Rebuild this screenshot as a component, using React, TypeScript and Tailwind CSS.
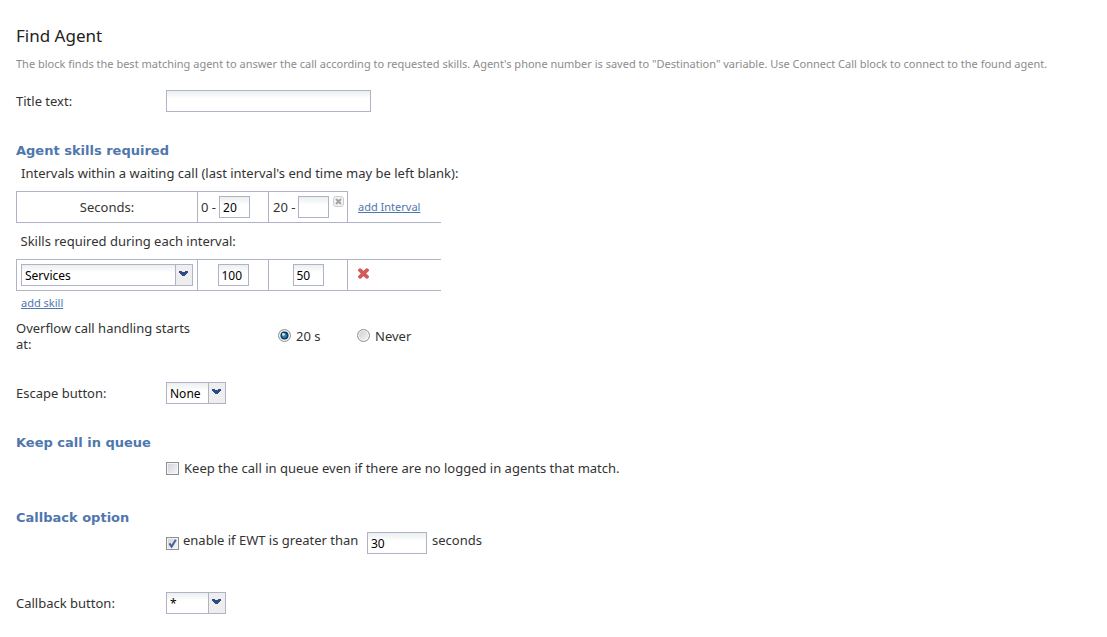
import { useState, type ReactNode, type ComponentProps } from "react";

const fieldStyle =
  "h-[22px] border border-[#b0b2c8] bg-white bg-linear-to-b from-[#ebefef] to-white to-40% px-[3px] text-[12px] text-black outline-none focus:border-[#6c7fb0]";

function TextField({ className = "", ...props }: ComponentProps<"input">) {
  return <input type="text" className={`${fieldStyle} ${className}`} {...props} />;
}

function SelectField({ className = "", children, ...props }: ComponentProps<"select">) {
  return (
    <span className={`relative inline-flex ${className}`}>
      <select className={`${fieldStyle} w-full appearance-none pt-px pr-5`} {...props}>
        {children}
      </select>
      <span className="pointer-events-none absolute inset-y-px right-px flex w-[17px] items-center justify-start rounded-tr-[2px] border-l border-[#b0b2c8] bg-[#eeeeee] pl-[3px]">
        <svg width="9" height="6" viewBox="0 0 9 6" className="mb-0.5 fill-[#2f4a8a]" shapeRendering="crispEdges" aria-hidden="true">
          <path d="M0 0h3v1h3V0h3v2H8v1H7v1H6v1H3V4H2V3H1V2H0z" />
        </svg>
      </span>
    </span>
  );
}

function CheckBox(props: ComponentProps<"input">) {
  return (
    <span className="relative inline-flex size-[13px] shrink-0">
      <input
        type="checkbox"
        className="peer size-[13px] appearance-none border border-[#8e8f8f] bg-linear-to-br from-[#cdd1d8] to-[#f8f8f8] shadow-[inset_0_0_0_1px_#f4f4f4]"
        {...props}
      />
      <svg
        viewBox="0 0 13 13"
        className="pointer-events-none absolute inset-0 hidden size-[13px] fill-none stroke-[#4a5f9e] peer-checked:block"
        strokeWidth="2"
        aria-hidden="true"
      >
        <path d="M3.4 6.4 5.6 9.6 9.8 2.8" />
      </svg>
    </span>
  );
}

function RadioOption({ children, ...props }: ComponentProps<"input">) {
  return (
    <label className="flex items-center gap-[5px]">
      <span className="relative inline-flex size-[13px]">
        <input
          type="radio"
          className="peer size-[13px] appearance-none rounded-full border border-[#8e8f8f] bg-linear-to-br from-[#c6c9ce] to-[#fafafa] shadow-[inset_0_0_0_1px_#f6f6f6]"
          {...props}
        />
        <svg viewBox="0 0 13 13" className="pointer-events-none absolute inset-0 hidden size-[13px] peer-checked:block" aria-hidden="true">
          <circle cx="6.5" cy="6.5" r="4" fill="#123a5c" />
          <circle cx="6.3" cy="6.5" r="2.5" fill="#2a84b5" />
          <circle cx="5.4" cy="5.4" r="1.4" fill="#c4ecfa" />
        </svg>
      </span>
      <span className="pt-0.5">{children}</span>
    </label>
  );
}

function SectionTitle({ children }: { children: ReactNode }) {
  return <h2 className="font-['DejaVu_Sans',sans-serif] text-[13px] leading-5 font-bold text-[#4f77ae]">{children}</h2>;
}

const rowStyle = "grid grid-cols-[150px_1fr] items-center";
const linkStyle = "text-[11px] text-[#4f77ae] underline";
const cellStyle = "h-[31px] border border-[#b0b2c8] p-0";
const openCellStyle = "h-[31px] border-b border-[#b0b2c8] p-0";

export default function App() {
  const [overflow, setOverflow] = useState("20");
  return (
    <main className="bg-white px-4 pt-6 pb-5 font-['Noto_Sans',sans-serif] text-[13px] leading-4 text-[#333333]">
      <h1 className="text-[17px] leading-6 text-[#222222]">Find Agent</h1>
      <p className="mt-2 text-[11px] text-[#8c8c8c]">
        The block finds the best matching agent to answer the call according to requested skills. Agent's phone number is
        saved to "Destination" variable. Use Connect Call block to connect to the found agent.
      </p>

      <div className={`${rowStyle} mt-[18px] mb-[29px]`}>
        <label htmlFor="title-text">Title text:</label>
        <TextField id="title-text" className="w-[205px]" />
      </div>

      <SectionTitle>Agent skills required</SectionTitle>
      <p className="mt-1 mb-[10px] ml-[5px]">
        Intervals within a waiting call (last interval's end time may be left blank):
      </p>
      <table className="w-[425px] table-fixed border-collapse">
        <colgroup>
          <col className="w-[181px]" />
          <col className="w-[71px]" />
          <col className="w-[79px]" />
          <col />
        </colgroup>
        <tbody>
          <tr>
            <th scope="row" className={`${cellStyle} text-center font-normal`}>
              Seconds:
            </th>
            <td className={cellStyle}>
              <label className="flex items-center gap-[3px] pl-[3px]">
                0 -
                <TextField defaultValue="20" className="w-[31px]" />
              </label>
            </td>
            <td className={cellStyle}>
              <div className="flex items-start gap-1 pl-1">
                <label className="flex items-center gap-[3px]">
                  20 -
                  <TextField className="w-[31px]" />
                </label>
                <button type="button" aria-label="Remove interval">
                  <svg width="11" height="11" viewBox="0 0 11 11" aria-hidden="true">
                    <rect x="0.5" y="0.5" width="10" height="10" rx="2.5" fill="#f4f4f4" stroke="#cccccc" />
                    <path d="M3 3 8 8M8 3 3 8" stroke="#a3a3a3" strokeWidth="2" />
                  </svg>
                </button>
              </div>
            </td>
            <td className={`${openCellStyle} pl-[10px]`}>
              <a href="#add-interval" className={linkStyle}>
                add Interval
              </a>
            </td>
          </tr>
          <tr>
            <td colSpan={4} className="h-[37px] p-0 pl-1">
              Skills required during each interval:
            </td>
          </tr>
          <tr>
            <td className={`${cellStyle} px-1`}>
              <SelectField aria-label="Skill" defaultValue="Services" className="w-full align-middle">
                <option>Services</option>
                <option>Sales</option>
              </SelectField>
            </td>
            <td className={`${cellStyle} text-center`}>
              <TextField aria-label="Skill level, first interval" defaultValue="100" className="w-[31px]" />
            </td>
            <td className={`${cellStyle} text-center`}>
              <TextField aria-label="Skill level, second interval" defaultValue="50" className="w-[31px]" />
            </td>
            <td className={`${openCellStyle} border-t pl-[10px]`}>
              <button type="button" aria-label="Remove skill" className="mb-1 block">
                <svg width="11" height="11" viewBox="0 0 11 11" aria-hidden="true">
                  <path d="M2 2.2 9 8.8M9 2.2 2 8.8" stroke="#d25a5a" strokeWidth="3.8" strokeLinecap="round" />
                </svg>
              </button>
            </td>
          </tr>
        </tbody>
      </table>
      <a href="#add-skill" className={`${linkStyle} mt-1 ml-[5px] inline-block`}>
        add skill
      </a>

      <fieldset className="mt-[9px] flex items-start">
        <div id="overflow-label" className="w-[190px]">
          Overflow call handling starts at:
        </div>
        <div role="radiogroup" aria-labelledby="overflow-label" className="mt-1.5 ml-[72px] grid grid-cols-[79px_auto]">
          <RadioOption name="overflow" value="20" checked={overflow === "20"} onChange={() => setOverflow("20")}>
            20 s
          </RadioOption>
          <RadioOption name="overflow" value="never" checked={overflow === "never"} onChange={() => setOverflow("never")}>
            Never
          </RadioOption>
        </div>
      </fieldset>

      <div className={`${rowStyle} mt-[30px] mb-[29px]`}>
        <label htmlFor="escape-button">Escape button:</label>
        <SelectField id="escape-button" defaultValue="None" className="w-[60px]">
          <option>None</option>
          <option>*</option>
          <option>#</option>
        </SelectField>
      </div>

      <SectionTitle>Keep call in queue</SectionTitle>
      <label className="mt-[7px] mb-8 ml-[150px] flex items-center gap-[5px]">
        <CheckBox />
        Keep the call in queue even if there are no logged in agents that match.
      </label>

      <SectionTitle>Callback option</SectionTitle>
      <div className="mt-1 ml-[150px] flex items-start gap-[5px]">
        <label className="flex min-w-[196px] items-end gap-1">
          <CheckBox defaultChecked />
          <span className="pb-0.5">enable if EWT is greater than</span>
        </label>
        <TextField aria-label="Expected waiting time in seconds" defaultValue="30" className="w-[60px]" />
        <span>seconds</span>
      </div>

      <div className={`${rowStyle} mt-[38px]`}>
        <label htmlFor="callback-button">Callback button:</label>
        <SelectField id="callback-button" defaultValue="*" className="w-[60px]">
          <option>*</option>
          <option>#</option>
        </SelectField>
      </div>
    </main>
  );
}
